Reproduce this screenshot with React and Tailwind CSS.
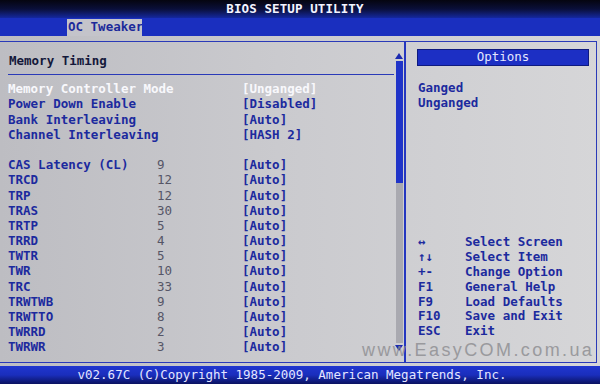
import React from "react";

// ── Datos ─────────────────────────────────────────────────────────────────────

const TOP_ROWS = [
  { label: "Memory Controller Mode", value: "[Unganged]", active: true },
  { label: "Power Down Enable", value: "[Disabled]" },
  { label: "Bank Interleaving", value: "[Auto]" },
  { label: "Channel Interleaving", value: "[HASH 2]" },
];

const TIMINGS = [
  ["CAS Latency (CL)", "9"],
  ["TRCD", "12"],
  ["TRP", "12"],
  ["TRAS", "30"],
  ["TRTP", "5"],
  ["TRRD", "4"],
  ["TWTR", "5"],
  ["TWR", "10"],
  ["TRC", "33"],
  ["TRWTWB", "9"],
  ["TRWTTO", "8"],
  ["TWRRD", "2"],
  ["TWRWR", "3"],
];

const KEYS = [
  ["↔", "Select Screen"],
  ["↑↓", "Select Item"],
  ["+-", "Change Option"],
  ["F1", "General Help"],
  ["F9", "Load Defaults"],
  ["F10", "Save and Exit"],
  ["ESC", "Exit"],
];

const MONO = { fontFamily: '"DejaVu Sans Mono", "Liberation Mono", monospace' };

export default function App() {
  return (
    <div
      className="w-[600px] h-[384px] overflow-hidden relative flex flex-col bg-black text-[12.5px] font-bold"
      style={MONO}
    >
      {/* Title */}
      <div className="h-[18px] flex items-center justify-center pr-[10px] bg-gradient-to-b from-[#050510] via-[#0a0f3a] to-[#1428a0] text-[#f4f4ff] tracking-[0.1px]">
        BIOS SETUP UTILITY
      </div>

      {/* Tabs */}
      <div className="h-[18px] bg-[#1a2fbf] flex items-end pl-[67px]">
        <div className="h-[17px] w-[75px] bg-[#c4c4ca] text-[#1c2a9a] flex items-center pl-[1px] leading-none whitespace-nowrap overflow-hidden">
          OC Tweaker
        </div>
      </div>

      {/* Main */}
      <div className="h-[330px] bg-gradient-to-r from-[#bdbdc2] via-[#cbcbcf] to-[#d6d6d8] pt-[5px]">
        <div className="h-[322px] border-t border-r border-b border-[#2a3ab8] flex mr-[3px]">
          {/* Left panel */}
          <div className="w-[406px] border-r-2 border-[#2436c0] flex">
            <div className="w-[394px] pl-[8px] pt-[9px]">
              <div className="h-[20px] pl-[1px] flex items-center text-[#14183a]">
                Memory Timing
              </div>
              <div className="h-[1px] mt-[3px] bg-[#2a3ab8]" />
              <div className="pt-[7px]">
                {TOP_ROWS.map((r) => (
                  <div
                    key={r.label}
                    className={`h-[15.2px] flex items-center ${r.active ? "text-[#f8f8fc]" : "text-[#1c2a9e]"}`}
                  >
                    <span className="w-[234px] whitespace-pre">{r.label}</span>
                    <span>{r.value}</span>
                  </div>
                ))}
                <div className="h-[15.2px]" />
                {TIMINGS.map(([label, num]) => (
                  <div key={label} className="h-[15.2px] flex items-center text-[#1c2a9e]">
                    <span className="w-[149px] whitespace-pre">{label}</span>
                    <span className="w-[85px] font-normal text-[#555566]">{num}</span>
                    <span>[Auto]</span>
                  </div>
                ))}
              </div>
            </div>

            {/* Scrollbar */}
            <div className="w-[10px] flex flex-col items-center pt-[11px]">
              <svg width="8" height="6" viewBox="0 0 8 6">
                <path d="M4 0 L8 6 L0 6 Z" fill="#1c2ab0" />
              </svg>
              <div className="w-[7px] mt-[2px] flex flex-col">
                <div className="h-[122px] bg-[#1f33c8]" />
                <div className="h-[160px] bg-[#a9a9b0]" />
              </div>
              <svg width="8" height="6" viewBox="0 0 8 6" className="mt-[2px]">
                <path d="M0 0 L8 0 L4 6 Z" fill="#1c2ab0" />
              </svg>
            </div>
          </div>

          {/* Right panel */}
          <div className="flex-1 pl-[11px] pr-[7px] pt-[7px] flex flex-col">
            <div className="h-[17px] bg-[#1c2fc4] border border-[#0e1a80] text-[#e6e8ff] flex items-center justify-center font-normal">
              Options
            </div>
            <div className="pt-[15px] pl-[1px] text-[#1c2a9e]">
              <div className="h-[15.2px] flex items-center">Ganged</div>
              <div className="h-[15.2px] flex items-center">Unganged</div>
            </div>
            <div className="mt-[124px] pl-[1px] text-[#1c2a9e]">
              {KEYS.map(([k, d]) => (
                <div key={d} className="h-[14.8px] flex items-center">
                  <span className="w-[47px]">{k}</span>
                  <span>{d}</span>
                </div>
              ))}
            </div>
          </div>
        </div>
      </div>

      {/* Footer */}
      <div className="h-[18px] bg-gradient-to-b from-[#2036d0] via-[#1a2ebc] to-[#0a1260] flex items-center justify-center pr-[16px] text-[#e4e6ff] font-normal">
        v02.67C (C)Copyright 1985-2009, American Megatrends, Inc.
      </div>

      {/* Watermark */}
      <div
        className="absolute left-[362px] top-[341px] text-[18px] tracking-[2.4px] font-normal text-[#8c8c90] opacity-80 leading-none"
        style={{ fontFamily: '"Liberation Sans", Arial, sans-serif' }}
      >
        www.EasyCOM.com.ua
      </div>
    </div>
  );
}
